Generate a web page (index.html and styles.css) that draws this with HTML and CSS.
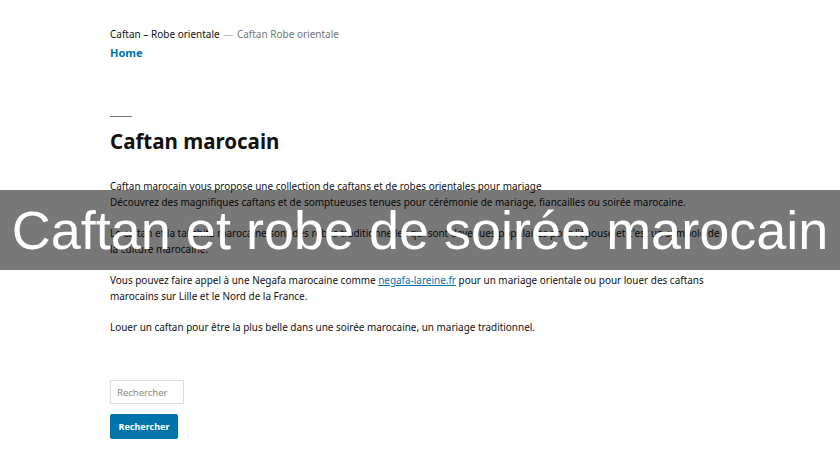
FILE: index.html
```html
<!DOCTYPE html>
<html lang="fr">
<head>
<meta charset="utf-8">
<title>Caftan marocain</title>
<link rel="stylesheet" href="styles.css">
</head>
<body>
<div class="page">
  <header class="site-header">
    <div class="branding">
      <span class="site-title">Caftan – Robe orientale</span>
      <span class="sep">—</span>
      <span class="site-desc">Caftan Robe orientale</span>
    </div>
    <nav class="menu"><a href="#">Home</a></nav>
  </header>
  <main class="content">
    <hr class="title-rule">
    <h1 class="entry-title">Caftan marocain</h1>
    <div class="entry">
      <p>Caftan marocain vous propose une collection de caftans et de robes orientales pour mariage<br>Découvrez des magnifiques caftans et de somptueuses tenues pour cérémonie de mariage, fiancailles ou soirée marocaine.</p>
      <p>Le caftan et la takchita marocaine sont des robes traditionnelles qui sont devenues populaires pour l'épouse et c'est un symbole de la culture marocaine.</p>
      <p>Vous pouvez faire appel à une Negafa marocaine comme <a href="#">negafa-lareine.fr</a> pour un mariage orientale ou pour louer des caftans marocains sur Lille et le Nord de la France.</p>
      <p>Louer un caftan pour être la plus belle dans une soirée marocaine, un mariage traditionnel.</p>
    </div>
    <form class="search">
      <input class="search-field" type="text" placeholder="Rechercher">
      <button class="search-btn" type="button">Rechercher</button>
    </form>
  </main>
</div>
<div class="overlay">Caftan et robe de soirée marocain</div>
</body>
</html>
```
FILE: styles.css
```css
html, body {
  margin: 0;
  padding: 0;
  background: #fff;
}
body {
  font-family: "Noto Sans", "Open Sans", sans-serif;
  color: #111;
  width: 840px;
  height: 460px;
  overflow: hidden;
  position: relative;
}
.page {
  padding: 26px 0 0 110px;
  width: 614px;
}
.site-header {
  display: flex;
  flex-direction: column;
}
.branding {
  font-size: 10px;
  line-height: 16px;
}
.site-title {
  color: #111;
}
.sep {
  color: #bbb;
  margin: 0 1px;
}
.site-desc {
  color: #767676;
}
.menu {
  margin-top: -2px;
}
.menu a {
  color: #0073aa;
  font-weight: 700;
  font-size: 11px;
  line-height: 16px;
  text-decoration: none;
}
.content {
  padding-top: 54px;
}
.title-rule {
  width: 22px;
  height: 1px;
  border: 0;
  background: #767676;
  margin: 0;
}
.entry-title {
  font-size: 20.5px;
  font-weight: 700;
  line-height: 28px;
  margin: 10px 0 0;
  color: #111;
}
.entry {
  padding-top: 23px;
  font-size: 9.95px;
  line-height: 16px;
}
.entry p {
  margin: 0 0 15px;
}
.entry a {
  color: #0073aa;
  text-decoration: underline;
}
.search {
  display: flex;
  flex-direction: column;
  align-items: flex-start;
  gap: 10px;
  padding-top: 30px;
}
.search-field {
  width: 74px;
  height: 24px;
  box-sizing: border-box;
  border: 1px solid #ddd;
  padding: 0 6px;
  font-family: inherit;
  font-size: 9.5px;
  color: #767676;
  outline: none;
}
.search-field::placeholder {
  color: #8a8a8a;
}
.search-btn {
  width: 68px;
  height: 25px;
  border: 0;
  border-radius: 2px;
  background: #0073aa;
  color: #fff;
  font-family: inherit;
  font-weight: 700;
  font-size: 9px;
  padding: 0;
}
.overlay {
  position: absolute;
  left: 0;
  top: 190px;
  width: 840px;
  height: 80px;
  background: rgba(0, 0, 0, 0.53);
  color: #fff;
  font-family: "Liberation Sans", Arial, sans-serif;
  font-size: 54px;
  line-height: 80px;
  text-align: center;
  white-space: nowrap;
}
```
